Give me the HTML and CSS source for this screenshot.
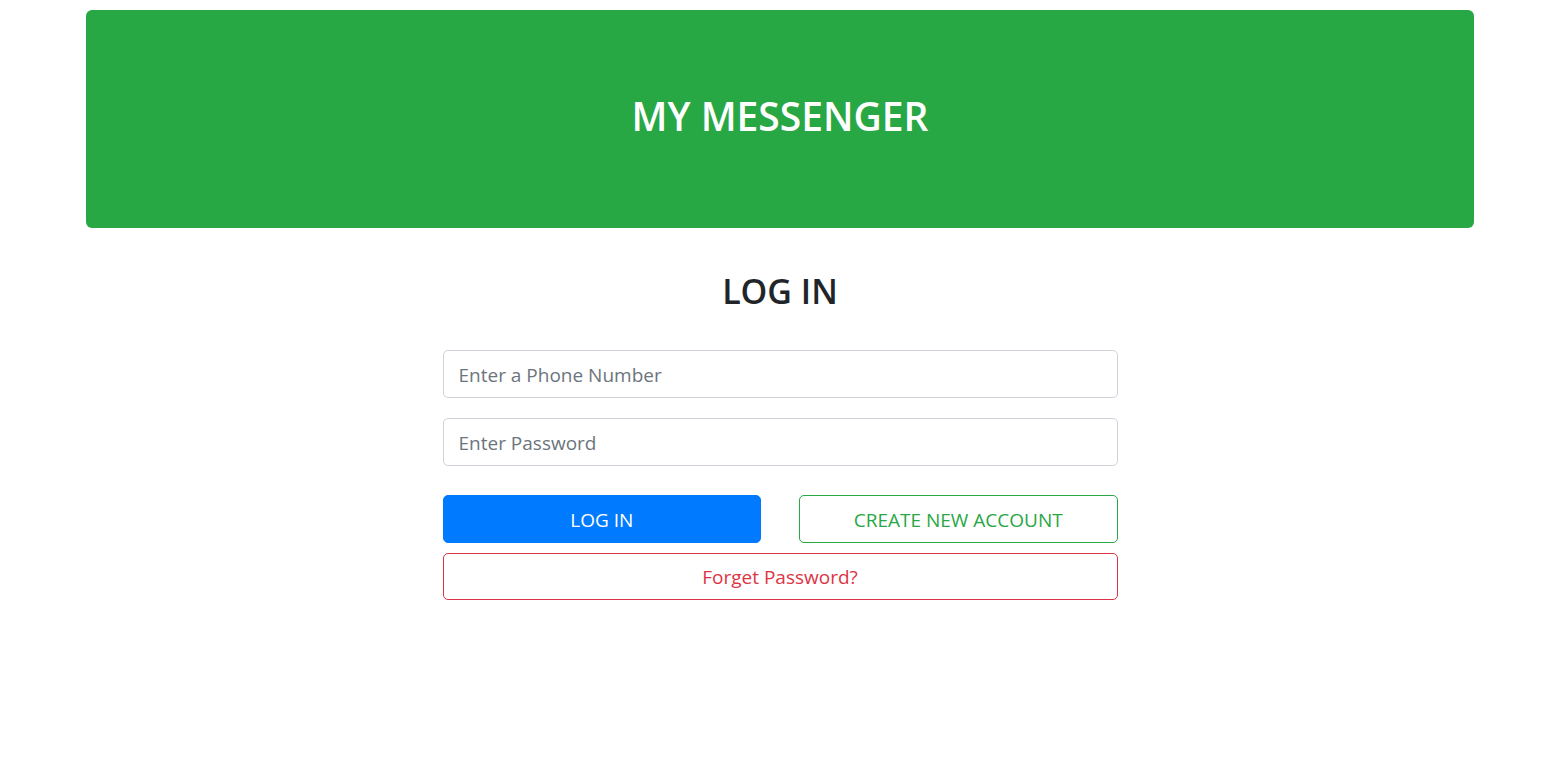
FILE: index.html
```html
<!DOCTYPE html>
<html lang="en">
<head>
<meta charset="utf-8">
<meta name="viewport" content="width=device-width, initial-scale=1">
<title>My Messenger</title>
<link rel="stylesheet" href="styles.css">
</head>
<body>
<div class="container">
  <header class="banner"><h1 class="banner-title">MY MESSENGER</h1></header>
  <main class="login">
    <h2 class="login-title">LOG IN</h2>
    <form class="login-form">
      <input class="field" type="tel" placeholder="Enter a Phone Number" aria-label="Phone number">
      <input class="field" type="password" placeholder="Enter Password" aria-label="Password">
      <div class="actions">
        <button class="btn btn-primary" type="submit">LOG IN</button>
        <button class="btn btn-success" type="button">CREATE NEW ACCOUNT</button>
      </div>
      <button class="btn btn-danger" type="button">Forget Password?</button>
    </form>
  </main>
</div>
</body>
</html>
```

FILE: styles.css
```css
* {
  box-sizing: border-box;
}

body {
  margin: 0;
  background: #fff;
  color: #212529;
  font-family: "Segoe UI", "Open Sans", "Noto Sans", sans-serif;
}

.container {
  max-width: 1424px;
  margin: 0 auto;
  padding: 10px 18px;
}

.banner {
  padding: 82px 40px 88px;
  border-radius: 6px;
  background: #28a745;
  color: #fff;
  text-align: center;
}

.banner-title {
  margin: 0;
  font-size: 39px;
  font-weight: 600;
  line-height: 48px;
}

.login {
  max-width: 675px;
  margin: 41px auto 0;
}

.login-title {
  margin: 0 0 37px;
  font-size: 34px;
  font-weight: 600;
  line-height: 44px;
  text-align: center;
}

.field,
.btn {
  display: block;
  width: 100%;
  height: 48px;
  border: 1px solid #ced4da;
  border-radius: 5px;
  background: #fff;
  font-family: inherit;
  font-size: 19px;
  line-height: 28px;
}

.field {
  margin-bottom: 20px;
  padding: 10px 15px 8px;
  color: #495057;
}

.field::placeholder {
  color: #6c757d;
  opacity: 1;
}

.actions {
  display: grid;
  grid-template-columns: 1fr 1fr;
  gap: 38px;
  margin: 29px 0 10px;
}

.btn {
  padding: 10px 14px 8px;
  cursor: pointer;
}

.btn-primary {
  border-color: #007bff;
  background: #007bff;
  color: #fff;
}

.btn-success {
  border-color: #28a745;
  color: #28a745;
}

.btn-danger {
  height: 47px;
  padding: 9px 14px;
  border-color: #dc3545;
  color: #dc3545;
}
```
